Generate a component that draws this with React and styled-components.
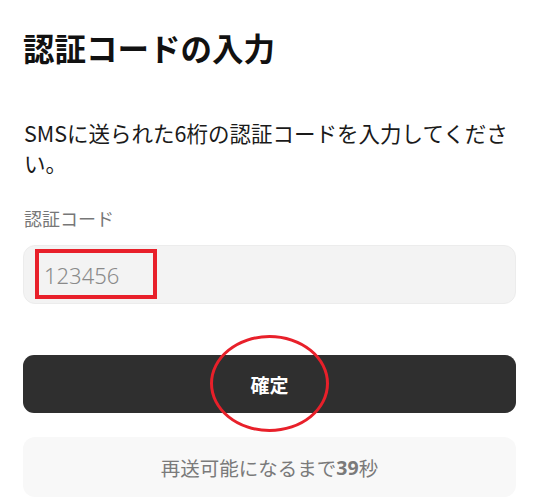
import styled, { createGlobalStyle } from 'styled-components';

const GlobalStyle = createGlobalStyle`
  body {
    margin: 0;
    background: #ffffff;
    font-family: "Noto Sans CJK JP", "Noto Sans", sans-serif;
    color: #111111;
  }
`;

export default function App() {
  return (
    <>
      <GlobalStyle />
      <Page>
        <Title>認証コードの入力</Title>
        <Lead>SMSに送られた6桁の認証コードを入力してください。</Lead>
        <Label>認証コード</Label>
        <InputWrap>
          <CodeInput placeholder="123456" inputMode="numeric" />
          <MarkRect />
        </InputWrap>
        <SubmitWrap>
          <SubmitButton>確定</SubmitButton>
          <MarkEllipse />
        </SubmitWrap>
        <ResendBox>
          再送可能になるまで<strong>39</strong>秒
        </ResendBox>
      </Page>
    </>
  );
}

const Page = styled.div`
  display: flex;
  flex-direction: column;
  padding: 26px 24px 0 23px;
  width: 540px;
  box-sizing: border-box;
`;

const Title = styled.h1`
  margin: 0;
  font-size: 31.5px;
  line-height: 42px;
  font-weight: 700;
  letter-spacing: 0;
`;

const Lead = styled.p`
  margin: 50px 0 0;
  padding-left: 1px;
  font-size: 21.5px;
  line-height: 30px;
  color: #1a1a1a;
`;

const Label = styled.div`
  margin-top: 28px;
  padding-left: 1px;
  font-size: 18px;
  line-height: 24px;
  color: #777777;
`;

const InputWrap = styled.div`
  position: relative;
  margin-top: 15px;
`;

const CodeInput = styled.input`
  display: block;
  width: 100%;
  height: 59px;
  box-sizing: border-box;
  padding: 0 20px;
  border: 1px solid #ececec;
  border-radius: 12px;
  background: #f3f3f3;
  font-family: "Noto Sans", "Noto Sans CJK JP", sans-serif;
  font-size: 22px;
  font-weight: 300;
  color: #222;
  outline: none;
  &::placeholder {
    color: #8a8a8a;
  }
`;

const MarkRect = styled.div`
  position: absolute;
  left: 12px;
  top: 4px;
  width: 122px;
  height: 50px;
  box-sizing: border-box;
  border: 4px solid #e8202a;
  pointer-events: none;
`;

const SubmitWrap = styled.div`
  position: relative;
  margin-top: 51px;
`;

const SubmitButton = styled.button`
  display: block;
  width: 100%;
  height: 58px;
  border: none;
  border-radius: 11px;
  background: #2f2f2f;
  color: #ffffff;
  font-family: "Noto Sans CJK JP", sans-serif;
  font-size: 19px;
  font-weight: 700;
  cursor: pointer;
`;

const MarkEllipse = styled.div`
  position: absolute;
  left: 187px;
  top: -20px;
  width: 119px;
  height: 97px;
  box-sizing: border-box;
  border: 3px solid #e8202a;
  border-radius: 50%;
  pointer-events: none;
`;

const ResendBox = styled.div`
  margin-top: 24px;
  height: 60px;
  border-radius: 12px;
  background: #f8f8f8;
  display: flex;
  align-items: center;
  justify-content: center;
  font-size: 19.5px;
  color: #7a7a7a;
  strong {
    font-weight: 700;
    font-family: "Noto Sans", sans-serif;
  }
`;
